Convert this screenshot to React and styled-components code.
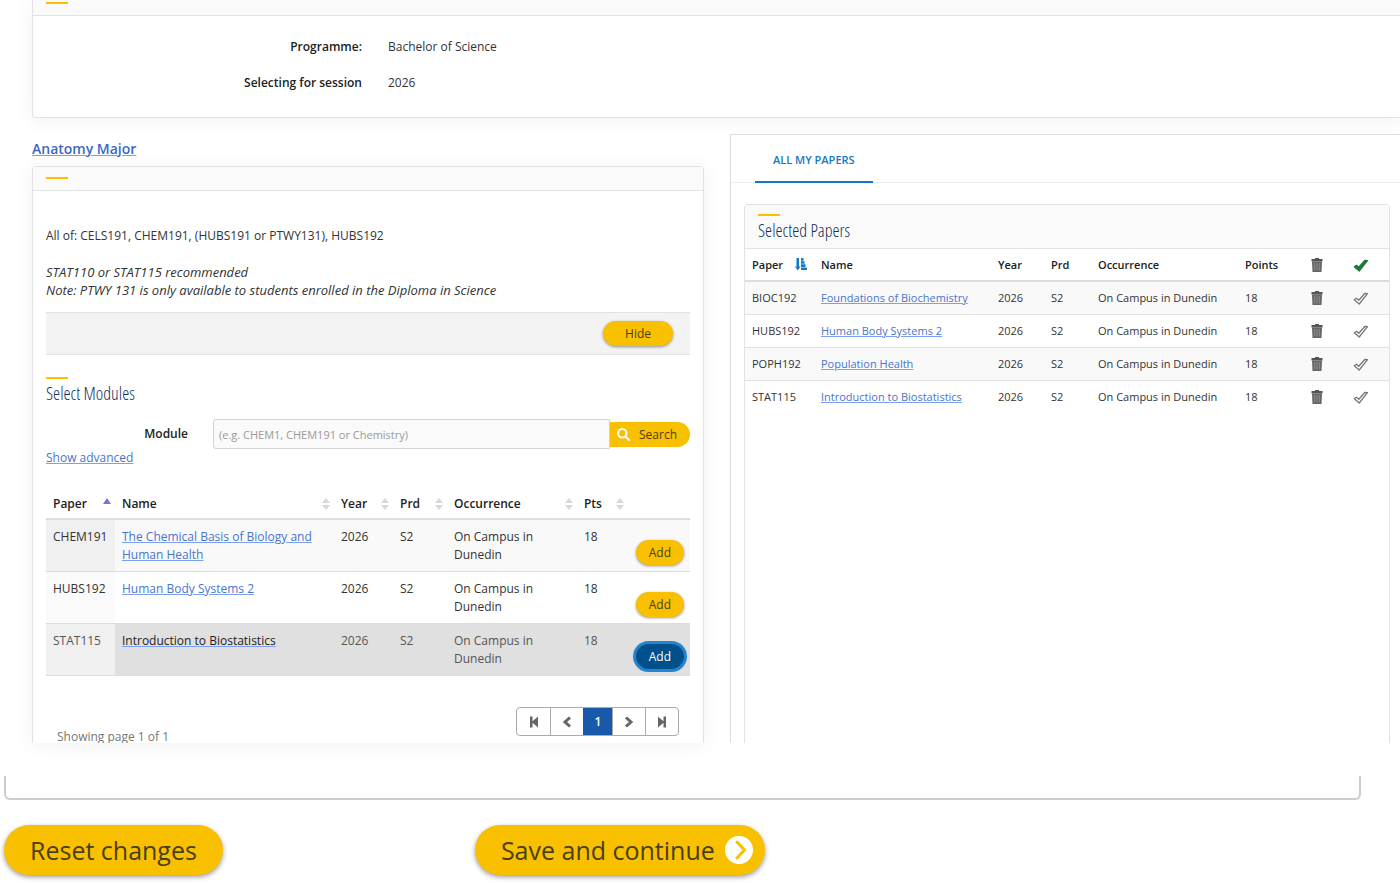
import styled, { createGlobalStyle } from "styled-components";

const GlobalStyle = createGlobalStyle`
  * {
    box-sizing: border-box;
  }
  body {
    margin: 0;
    background-color: #fff;
    color: #333;
    font-family: "Open Sans", "Noto Sans", sans-serif;
    font-size: 12px;
    line-height: 18px;
  }
  button,
  input {
    font-family: inherit;
  }
`;
const Page = styled.div`
  overflow: hidden;
`;
const Card = styled.section`
  border: 1px solid #e2e2e2;
  border-radius: 4px;
  box-shadow: 0 2px 20px rgba(0, 0, 0, 0.06);
`;
const CardHead = styled.header`
  padding: 10px 13px 11px;
  border-bottom: 1px solid #e2e2e2;
  background-color: #fafafa;
`;
const Dash = styled.div`
  width: 22px;
  height: 2px;
  background-color: #fcc000;
`;
const SummaryCard = styled(Card)`
  margin-left: 32px;
  border-width: 0 0 1px 1px;
  border-radius: 0 0 0 4px;
`;
const SummaryHead = styled(CardHead)`
  padding-top: 2px;
`;
const Summary = styled.dl`
  display: grid;
  grid-template-columns: 329px 1fr;
  gap: 18px 26px;
  margin: 0;
  padding: 22px 0 25px;
`;
const Term = styled.dt`
  text-align: right;
  font-weight: 600;
  color: #222;
`;
const Detail = styled.dd`
  margin: 0;
`;
const Columns = styled.main`
  display: grid;
  grid-template-columns: 672fr 670fr;
  gap: 26px;
  padding: 16px 0 0 32px;
`;
const LeftColumn = styled.div`
  display: flex;
  flex-direction: column;
  padding-top: 4px;
`;
const MajorLink = styled.a`
  align-self: flex-start;
  margin-bottom: 6px;
  color: #3a68c4;
  font-size: 14px;
  font-weight: 600;
  line-height: 22px;
  text-decoration-color: #7ba0f0;
`;
const MajorCard = styled(Card)`
  flex: 1;
  border-bottom: 0;
  border-radius: 4px 4px 0 0;
`;
const MajorBody = styled.div`
  padding: 36px 13px 0;
`;
const Rule = styled.p`
  margin: 0 0 18px;
`;
const Note = styled.p`
  margin: 0 0 13px;
  font-size: 13px;
  font-style: italic;
`;
const HideBar = styled.div`
  display: flex;
  justify-content: flex-end;
  padding: 8px 17px;
  margin-bottom: 22px;
  border: 1px solid #e2e2e2;
  border-width: 1px 0;
  background-color: #f3f3f3;
`;
const PillButton = styled.button`
  display: block;
  height: 25px;
  margin-left: auto;
  padding: 0 ${(props) => (props.$wide ? 22 : 13)}px;
  border: 0;
  border-radius: 13px;
  background-color: ${(props) => (props.$active ? "#00508c" : "#f9c000")};
  color: ${(props) => (props.$active ? "#fff" : "#4a3f14")};
  font-size: 12px;
  line-height: 25px;
  box-shadow: ${(props) => (props.$active ? "0 0 0 3px #2384cf" : "0 1px 3px rgba(0, 0, 0, 0.4)")};
`;
const Title = styled.h2`
  margin: 0;
  color: #12305c;
  font-family: "Open Sans Condensed Light", "Open Sans Condensed", "Roboto Condensed", "Liberation Sans Narrow", sans-serif;
  font-size: 18px;
  font-weight: 300;
  line-height: 28px;
`;
const SearchForm = styled.form`
  display: flex;
  align-items: center;
  margin-top: 12px;
`;
const SearchLabel = styled.label`
  width: 142px;
  margin-right: 25px;
  text-align: right;
  font-weight: 600;
  color: #222;
`;
const SearchInput = styled.input`
  flex: 1;
  min-width: 0;
  height: 30px;
  padding: 0 5px;
  border: 1px solid #d4d4d4;
  border-radius: 3px 0 0 3px;
  background-color: #fafafa;
  font-size: 11px;
  &::placeholder {
    color: #999;
  }
`;
const SearchBtn = styled.button`
  display: flex;
  align-items: center;
  gap: 9px;
  width: 80px;
  height: 25px;
  padding: 0 7px;
  border: 0;
  border-radius: 0 13px 13px 0;
  background-color: #f9c000;
  color: #4a3f14;
  font-size: 12px;
`;
const TextLink = styled.a`
  color: ${(props) => (props.$dark ? "#222" : "#4a74cc")};
  text-decoration-color: #7ba0f0;
`;
const Table = styled.table`
  width: 100%;
  border-collapse: collapse;
  table-layout: fixed;
`;
const ModuleTable = styled(Table)`
  margin-top: 20px;
  th {
    height: 32px;
    padding: 2px 4px 0 7px;
    border-bottom: 2px solid #ddd;
    text-align: left;
    font-weight: 600;
    color: #222;
  }
  td {
    padding: 8px 7px 7px;
    border-bottom: 1px solid #ddd;
    vertical-align: top;
  }
  td:last-child {
    padding: 20px 6px 0;
  }
`;
const ModuleRow = styled.tr`
  background-color: ${(props) => (props.$active ? "#e0e0e0" : props.$odd ? "#f9f9f9" : "#fff")};
  color: ${(props) => (props.$active ? "#555" : "#333")};
  td:first-child {
    background-color: ${(props) => (props.$odd ? "#f0f0f0" : "#fafafa")};
  }
`;
const SortHead = styled.div`
  display: flex;
  align-items: center;
  justify-content: space-between;
`;
const PagerRow = styled.div`
  display: flex;
  justify-content: space-between;
  height: 36px;
  margin-top: 31px;
  padding: 0 11px;
  overflow: hidden;
`;
const Pager = styled.nav`
  display: flex;
  height: 29px;
  border: 1px solid #aaa;
  border-radius: 4px;
`;
const PagerBtn = styled.button`
  display: flex;
  align-items: center;
  justify-content: center;
  width: ${(props) => (props.$current ? 29 : 33)}px;
  padding: 0;
  border: 0;
  border-left: 1px solid ${(props) => (props.$current ? "#185aa9" : "#aaa")};
  background-color: ${(props) => (props.$current ? "#185aa9" : "transparent")};
  color: ${(props) => (props.$current ? "#fff" : "#666")};
  font-size: 12px;
  font-weight: 600;
  &:first-child {
    border-left: 0;
  }
`;
const PageInfo = styled.p`
  margin: 0;
  padding-top: 21px;
  color: #777;
`;
const RightPanel = styled.aside`
  display: flex;
  flex-direction: column;
  border: 1px solid #ddd;
  border-width: 1px 0 0 1px;
  font-size: 11px;
`;
const TabList = styled.div`
  display: flex;
  padding-left: 24px;
  border-bottom: 1px solid #eee;
`;
const Tab = styled.button`
  height: 48px;
  padding: 2px 18px 0;
  margin-bottom: -1px;
  border: 0;
  border-bottom: 2px solid #1478c8;
  background-color: transparent;
  color: #1478c8;
  font-size: 11px;
  font-weight: 600;
`;
const SelectedCard = styled(Card)`
  flex: 1;
  margin: 21px 10px 0 13px;
  border-bottom: 0;
  border-radius: 4px 4px 0 0;
  box-shadow: none;
`;
const SelectedHead = styled(CardHead)`
  padding: 9px 13px 4px;
`;
const SelectedTable = styled(Table)`
  th,
  td {
    height: 33px;
    padding: 0 7px;
    text-align: left;
  }
  th {
    height: 32px;
    border-bottom: 2px solid #ddd;
    font-weight: 600;
    color: #222;
  }
  tbody tr + tr td {
    border-top: 1px solid #e2e2e2;
  }
  tbody tr:nth-child(odd) {
    background-color: #f9f9f9;
  }
`;
const IconBtn = styled.button`
  display: flex;
  padding: 0;
  margin: 0 auto;
  border: 0;
  background: none;
`;
const Frame = styled.div`
  height: 24px;
  margin: 33px 39px 0 4px;
  border: 2px solid #ccc;
  border-top: 0;
  border-radius: 0 0 6px 6px;
`;
const Actions = styled.footer`
  display: flex;
  gap: 252px;
  padding: 25px 4px 8px;
`;
const BigButton = styled.button`
  display: flex;
  align-items: center;
  gap: 10px;
  height: 50px;
  padding: 0 ${(props) => (props.$icon ? 12 : 26)}px 0 26px;
  border: 0;
  border-radius: 25px;
  background-color: #f9c000;
  color: #4a3f14;
  font-size: 25px;
  line-height: 34px;
  box-shadow: 0 2px 5px rgba(0, 0, 0, 0.4);
`;

function SortIcon() {
  return (
    <svg width="8" height="12" viewBox="0 0 8 12" fill="#d8d8d8">
      <path d="M4 0l4 5H0zM4 12l4-5H0z" />
    </svg>
  );
}

function SortedIcon() {
  return (
    <svg width="8" height="12" viewBox="0 0 8 12" fill="#7474dc">
      <path d="M4 0l4 6H0z" />
    </svg>
  );
}

function SortAmountIcon() {
  return (
    <svg width="12" height="13" viewBox="0 0 12 13" fill="#1478c8">
      <path d="M1.500 0h2.500v8.500h1.500L2.800 12.500 0 8.500h1.500zM6 0h2.500v2.700H6zM6 3.200h3.500v2.600H6zM6 6.300h4.500v2.600H6zM6 9.400h6V12H6z" />
    </svg>
  );
}

function TrashIcon() {
  return (
    <svg width="12" height="14" viewBox="0 0 12 14">
      <path d="M4 0h4v1h3.500v2.500H.5V1H4z" fill="#555" />
      <path d="M1 3.500h10L10.500 14h-9z" fill="#666" />
      <path d="M3.700 5v7.500M6 5v7.500M8.300 5v7.500" stroke="#999" strokeWidth="0.800" />
    </svg>
  );
}

function CheckIcon({ filled }) {
  return (
    <svg width="16" height="14" viewBox="0 0 16 14">
      <path
        d="M1.300 8.800L3.500 7.300l2.300 2L12 2.300l2.500.3-8.300 10.400z"
        fill={filled ? "#1f7a35" : "#fff"}
        stroke={filled ? "#1f7a35" : "#777"}
        strokeWidth="1.300"
        strokeLinejoin="round"
      />
    </svg>
  );
}

function SearchIcon() {
  return (
    <svg width="13" height="13" viewBox="0 0 13 13" fill="none" stroke="#fff" strokeWidth="2">
      <circle cx="5.300" cy="5.300" r="4.200" />
      <path d="M8.500 8.500l3.500 3.500" strokeLinecap="round" />
    </svg>
  );
}

function StepIcon({ back, end }) {
  return (
    <svg width="12" height="12" viewBox="0 0 12 12">
      <g transform={back ? "matrix(-1 0 0 1 12 0)" : undefined}>
        {end ? (
          <path d="M2 .5l5.500 4.800V.5H10v11H7.500V6.700L2 11.500z" fill="#666" />
        ) : (
          <path d="M3 1.500L8 6l-5 4.500" fill="none" stroke="#666" strokeWidth="3" />
        )}
      </g>
    </svg>
  );
}

function ArrowIcon() {
  return (
    <svg width="28" height="28" viewBox="0 0 28 28">
      <circle cx="14" cy="14" r="14" fill="#fff" />
      <path d="M12 6l7.500 8-7.500 8" fill="none" stroke="#f9c000" strokeWidth="3" strokeLinecap="round" />
    </svg>
  );
}

const modules = [
  { code: "CHEM191", name: "The Chemical Basis of Biology and Human Health" },
  { code: "HUBS192", name: "Human Body Systems 2" },
  { code: "STAT115", name: "Introduction to Biostatistics", active: true },
];

const papers = [
  { code: "BIOC192", name: "Foundations of Biochemistry" },
  { code: "HUBS192", name: "Human Body Systems 2" },
  { code: "POPH192", name: "Population Health" },
  { code: "STAT115", name: "Introduction to Biostatistics" },
];

function Modules() {
  return (
    <ModuleTable>
      <colgroup>
        {[69, 219, 59, 54, 130, 51, 62].map((w, i) => (
          <col key={i} style={{ width: `${(w / 644) * 100}%` }} />
        ))}
      </colgroup>
      <thead>
        <tr>
          {["Paper", "Name", "Year", "Prd", "Occurrence", "Pts"].map((label) => (
            <th key={label}>
              <SortHead>
                {label}
                {label === "Paper" ? <SortedIcon /> : <SortIcon />}
              </SortHead>
            </th>
          ))}
          <th aria-label="Add" />
        </tr>
      </thead>
      <tbody>
        {modules.map((m, i) => (
          <ModuleRow key={m.code} $odd={i % 2 === 0} $active={m.active}>
            <td>{m.code}</td>
            <td>
              <TextLink href="#" $dark={m.active}>
                {m.name}
              </TextLink>
            </td>
            <td>2026</td>
            <td>S2</td>
            <td>
              On Campus in
              <br />
              Dunedin
            </td>
            <td>18</td>
            <td>
              <PillButton type="button" $active={m.active}>
                Add
              </PillButton>
            </td>
          </ModuleRow>
        ))}
      </tbody>
    </ModuleTable>
  );
}

function Selected() {
  return (
    <SelectedTable>
      <colgroup>
        {[69, 177, 53, 47, 147, 63, 32, 56].map((w, i) => (
          <col key={i} style={{ width: `${(w / 644) * 100}%` }} />
        ))}
      </colgroup>
      <thead>
        <tr>
          <th>
            <SortHead>
              Paper
              <SortAmountIcon />
            </SortHead>
          </th>
          <th>Name</th>
          <th>Year</th>
          <th>Prd</th>
          <th>Occurrence</th>
          <th>Points</th>
          <th>
            <IconBtn type="button" aria-label="Remove all">
              <TrashIcon />
            </IconBtn>
          </th>
          <th>
            <IconBtn type="button" aria-label="Confirm all">
              <CheckIcon filled />
            </IconBtn>
          </th>
        </tr>
      </thead>
      <tbody>
        {papers.map((p) => (
          <tr key={p.code}>
            <td>{p.code}</td>
            <td>
              <TextLink href="#">{p.name}</TextLink>
            </td>
            <td>2026</td>
            <td>S2</td>
            <td>On Campus in Dunedin</td>
            <td>18</td>
            <td>
              <IconBtn type="button" aria-label="Remove">
                <TrashIcon />
              </IconBtn>
            </td>
            <td>
              <IconBtn type="button" aria-label="Confirm">
                <CheckIcon />
              </IconBtn>
            </td>
          </tr>
        ))}
      </tbody>
    </SelectedTable>
  );
}

function App() {
  return (
    <Page>
      <GlobalStyle />
      <SummaryCard>
        <SummaryHead>
          <Dash />
        </SummaryHead>
        <Summary>
          <Term>Programme:</Term>
          <Detail>Bachelor of Science</Detail>
          <Term>Selecting for session</Term>
          <Detail>2026</Detail>
        </Summary>
      </SummaryCard>
      <Columns>
        <LeftColumn>
          <MajorLink href="#">Anatomy Major</MajorLink>
          <MajorCard>
            <CardHead>
              <Dash />
            </CardHead>
            <MajorBody>
              <Rule>All of: CELS191, CHEM191, (HUBS191 or PTWY131), HUBS192</Rule>
              <Note>
                STAT110 or STAT115 recommended
                <br />
                Note: PTWY 131 is only available to students enrolled in the Diploma in Science
              </Note>
              <HideBar>
                <PillButton type="button" $wide>
                  Hide
                </PillButton>
              </HideBar>
              <Dash />
              <Title>Select Modules</Title>
              <SearchForm>
                <SearchLabel htmlFor="module">Module</SearchLabel>
                <SearchInput id="module" type="text" placeholder="(e.g. CHEM1, CHEM191 or Chemistry)" />
                <SearchBtn type="button">
                  <SearchIcon />
                  Search
                </SearchBtn>
              </SearchForm>
              <TextLink href="#">Show advanced</TextLink>
              <Modules />
              <PagerRow>
                <PageInfo>Showing page 1 of 1</PageInfo>
                <Pager aria-label="Pages">
                  <PagerBtn type="button" aria-label="First">
                    <StepIcon back end />
                  </PagerBtn>
                  <PagerBtn type="button" aria-label="Previous">
                    <StepIcon back />
                  </PagerBtn>
                  <PagerBtn type="button" $current>
                    1
                  </PagerBtn>
                  <PagerBtn type="button" aria-label="Next">
                    <StepIcon />
                  </PagerBtn>
                  <PagerBtn type="button" aria-label="Last">
                    <StepIcon end />
                  </PagerBtn>
                </Pager>
              </PagerRow>
            </MajorBody>
          </MajorCard>
        </LeftColumn>
        <RightPanel>
          <TabList role="tablist">
            <Tab type="button" role="tab" aria-selected="true">
              ALL MY PAPERS
            </Tab>
          </TabList>
          <SelectedCard>
            <SelectedHead>
              <Dash />
              <Title>Selected Papers</Title>
            </SelectedHead>
            <Selected />
          </SelectedCard>
        </RightPanel>
      </Columns>
      <Frame />
      <Actions>
        <BigButton type="button">Reset changes</BigButton>
        <BigButton type="button" $icon>
          Save and continue
          <ArrowIcon />
        </BigButton>
      </Actions>
    </Page>
  );
}

export default App;
